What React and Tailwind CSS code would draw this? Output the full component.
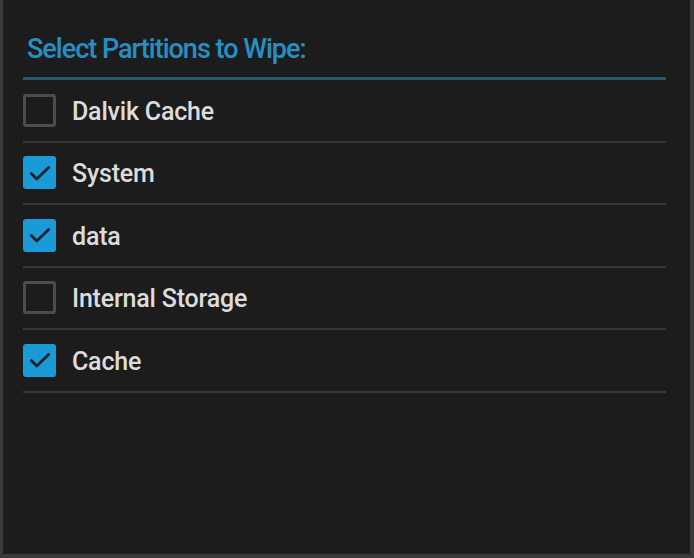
const PARTITIONS = [
  { name: 'Dalvik Cache', checked: false },
  { name: 'System', checked: true },
  { name: 'data', checked: true },
  { name: 'Internal Storage', checked: false },
  { name: 'Cache', checked: true },
]

function Checkbox({ checked }) {
  if (checked) {
    return (
      <span className="w-[33px] h-[33px] rounded-[3px] bg-[#1a9bd7] flex items-center justify-center shrink-0">
        <svg width="26" height="26" viewBox="0 0 24 24" fill="none">
          <path d="M4 12.5l5 5L20 7" stroke="#16232c" strokeWidth="2.6" strokeLinecap="round" strokeLinejoin="round" />
        </svg>
      </span>
    )
  }
  return <span className="w-[33px] h-[33px] rounded-[3px] border-[3px] border-[#4d4d4d] shrink-0" />
}

function PartitionRow({ item }) {
  return (
    <div className="h-[62.5px] flex items-center gap-[16px] border-b-2 border-[#363636]">
      <Checkbox checked={item.checked} />
      <span className="text-[25px] leading-[30px] pt-[3px] font-medium text-[#dcdcdc] tracking-[-0.2px]">{item.name}</span>
    </div>
  )
}

export default function App() {
  return (
    <div
      className="w-[694px] h-[558px] bg-[#1c1c1c] border-l-[3px] border-r-[4px] border-b-[4px] border-[#3a3a3a] overflow-hidden"
      style={{ fontFamily: 'Roboto, "Liberation Sans", sans-serif' }}
    >
      <div className="pl-[20px] pr-[24px] pt-[31px]">
        <div className="border-b-[3px] border-[#245a6e] pb-[10px] pl-[4px]">
          <div className="text-[27px] leading-[36px] font-medium text-[#2590c6] tracking-[-1px]">Select Partitions to Wipe:</div>
        </div>
        {PARTITIONS.map((item) => (
          <PartitionRow key={item.name} item={item} />
        ))}
      </div>
    </div>
  )
}
